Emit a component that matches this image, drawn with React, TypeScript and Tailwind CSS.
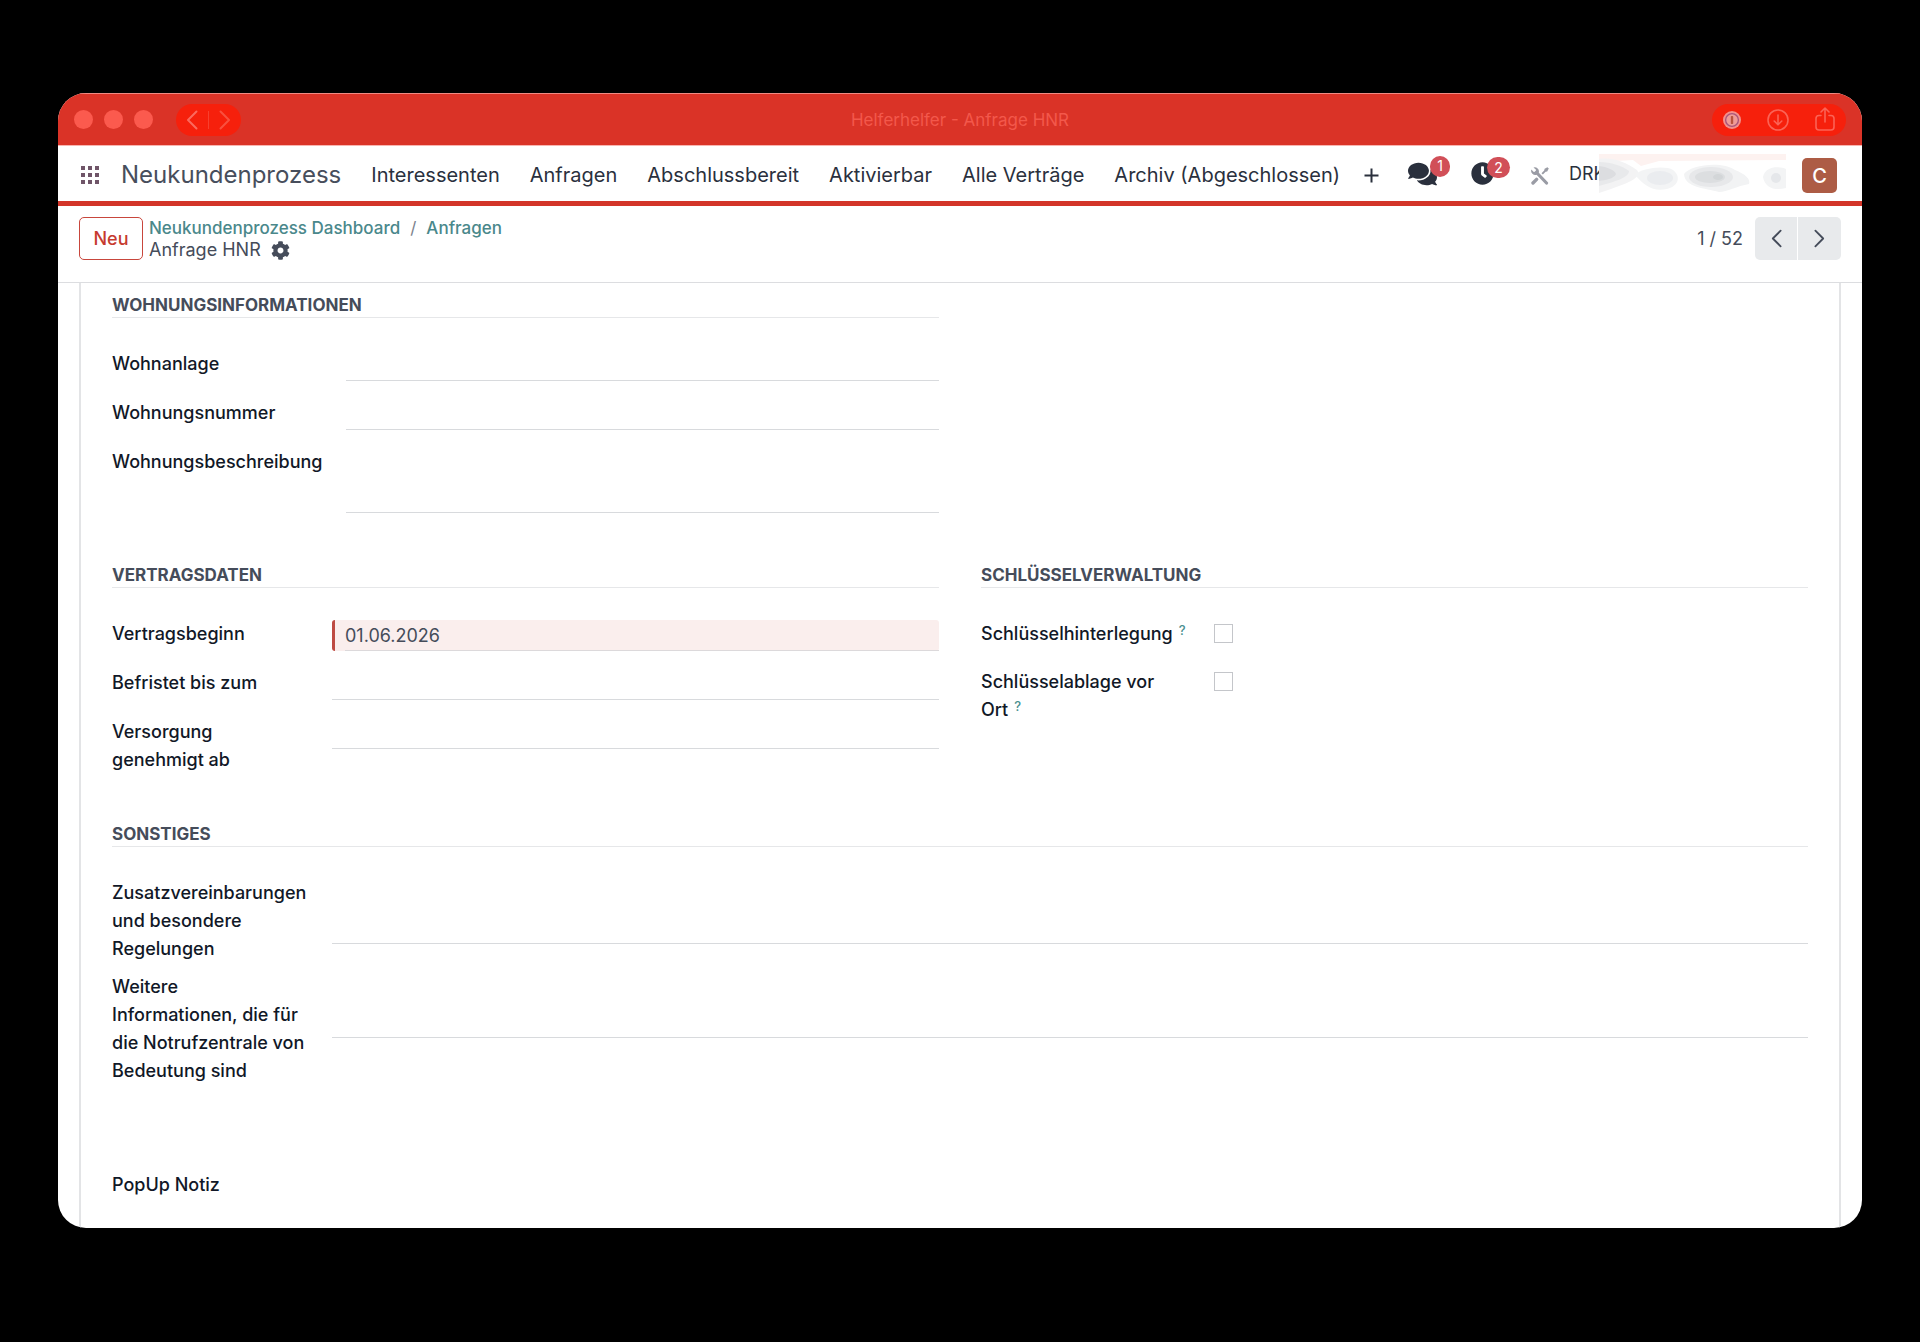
import React from "react";
import { FaClock, FaCog, FaComments } from "react-icons/fa";

const menu = ["Interessenten", "Anfragen", "Abschlussbereit", "Aktivierbar", "Alle Verträge", "Archiv (Abgeschlossen)"];

function Chevron({ dir, className }: { dir: "left" | "right"; className: string }) {
  return (
    <svg viewBox="0 0 12 20" className={className} fill="none" stroke="currentColor" strokeWidth="2" strokeLinecap="round" strokeLinejoin="round" aria-hidden="true">
      <path d={dir === "left" ? "M10.5 1.5 2 10l8.5 8.5" : "M1.5 1.5 10 10l-8.5 8.5"} />
    </svg>
  );
}

function TitleBar() {
  return (
    <div className="grid h-[53px] grid-cols-[1fr_auto_1fr] items-center border-t border-b border-t-[#f08a82] border-b-[#f9b5b0] bg-[#da3327] px-4">
      <div className="flex items-center">
        <div className="flex gap-[11px]">
          <span className="size-[19px] rounded-full bg-[#fb5a4e]" />
          <span className="size-[19px] rounded-full bg-[#fb5a4e]" />
          <span className="size-[19px] rounded-full bg-[#fb5a4e]" />
        </div>
        <div className="ml-[23px] flex h-8 items-center rounded-full bg-[#f6200c] px-2">
          <button type="button" aria-label="Zurück" className="px-[2px] text-[#fb6a5e]">
            <Chevron dir="left" className="h-5 w-3" />
          </button>
          <span className="mx-2 h-[18px] w-px bg-[#f8402f]" />
          <button type="button" aria-label="Vorwärts" className="px-[2px] text-[#f9503f]">
            <Chevron dir="right" className="h-5 w-3" />
          </button>
        </div>
      </div>
      <p className="text-[17px] leading-6 text-[#f3584b]">Helferhelfer - Anfrage HNR</p>
      <div className="flex h-8 w-[134px] items-center justify-between justify-self-end rounded-full bg-[#f6200c] px-[11px] text-[#fb6356]">
        <button type="button" aria-label="Passwortmanager">
          <svg viewBox="0 0 18 18" className="size-[18px]" aria-hidden="true">
            <circle cx="9" cy="9" r="9" fill="#f3918b" />
            <circle cx="9" cy="9" r="6.4" fill="#ef9c97" stroke="#a8557b" strokeWidth="1.4" />
            <rect x="7.8" y="5" width="2.4" height="8" rx="0.8" fill="#b8543f" />
          </svg>
        </button>
        <button type="button" aria-label="Downloads">
          <svg viewBox="0 0 22 22" className="size-[22px]" fill="none" stroke="currentColor" strokeWidth="1.6" strokeLinecap="round" strokeLinejoin="round" aria-hidden="true">
            <circle cx="11" cy="11" r="10" />
            <path d="M11 6v9.5M7.2 12l3.8 3.8 3.8-3.8" />
          </svg>
        </button>
        <button type="button" aria-label="Teilen" className="pb-[2px]">
          <svg viewBox="0 0 20 24" className="h-6 w-5" fill="none" stroke="currentColor" strokeWidth="1.6" strokeLinecap="round" strokeLinejoin="round" aria-hidden="true">
            <path d="M6 8.5H4A3 3 0 0 0 1 11.500V20a3 3 0 0 0 3 3h12a3 3 0 0 0 3-3v-8.500a3 3 0 0 0-3-3h-2M10 15V1.500M6 5l4-4 4 4" />
          </svg>
        </button>
      </div>
    </div>
  );
}

function ToolsIcon() {
  return (
    <svg viewBox="0 0 18 18" className="size-[18px]" aria-hidden="true">
      <path d="M5.500 5.500 15.500 16" stroke="#9a9ca5" strokeWidth="3.200" strokeLinecap="round" />
      <path d="M2.500 0.500 5 2.800 4.600 4.600 2.800 5 0.300 2.600A4.200 4.200 0 0 0 5.600 7.800L7.800 5.600A4.200 4.200 0 0 0 2.500 0.500Z" fill="#9a9ca5" />
      <path d="M10.500 6.200 13.200 3.400 13.600 1.800 16.400 0.200 17.800 1.600 16.200 4.400 14.600 4.800 11.900 7.600Z" fill="#9a9ca5" />
      <path d="M5.600 12.400 2 16" stroke="#9a9ca5" strokeWidth="3.400" strokeLinecap="round" />
    </svg>
  );
}

function Smudge() {
  return (
    <svg viewBox="0 0 187 39" preserveAspectRatio="none" className="absolute inset-y-0 right-0 h-[39px] w-[187px]" aria-hidden="true">
      <rect width="187" height="39" fill="#fff" />
      <path d="M0 0h187v6L60 7 42 12 34 6 0 8Z" fill="#fdf2f0" />
      <path d="M0 5C14 3 26 8 38 16 44 24 26 30 12 35L0 39Z" fill="#f3f3f4" />
      <path d="M0 8C12 8 24 12 30 17 30 24 14 28 0 32Z" fill="#e8e9eb" />
      <path d="M0 12C8 13 16 16 17 20 15 25 6 26 0 27Z" fill="#dcdde0" />
      <path d="M36 21C42 14 66 11 74 16 82 22 80 32 68 35 54 38 46 32 36 21Z" fill="#f3f4f5" />
      <ellipse cx="61" cy="24" rx="13" ry="7" fill="#eaecef" />
      <path d="M85 20C92 10 124 7 136 16 146 20 152 25 150 30 138 32 128 38 120 38 106 34 86 34 85 20Z" fill="#f2f3f4" />
      <ellipse cx="112" cy="23" rx="22" ry="10" fill="#e7e8ea" />
      <ellipse cx="111" cy="23" rx="15" ry="6" fill="#dcdee0" />
      <ellipse cx="119" cy="23" rx="5" ry="3" fill="#d3d6d8" />
      <path d="M164 23C166 12 180 12 187 15V34C176 37 166 34 164 23Z" fill="#f3f4f5" />
      <circle cx="177" cy="24" r="5" fill="#e5e7ea" />
    </svg>
  );
}

function NavBar() {
  return (
    <header className="flex h-[60px] items-center justify-between border-b-[5px] border-[#d33529] pr-[25px] pl-[23px] text-[#2a303d]">
      <nav className="flex items-center gap-6 pt-[2px] text-xl whitespace-nowrap" aria-label="Hauptmenü">
        <div className="flex items-center gap-[30px]">
          <div className="flex items-center gap-[22px]">
            <button type="button" aria-label="Apps" className="grid grid-cols-3 gap-[3px]">
              {Array.from({ length: 9 }, (_, i) => (
                <span key={i} className="size-1 bg-[#6f5568]" />
              ))}
            </button>
            <a href="#start" className="text-2xl text-[#474e5c]">Neukundenprozess</a>
          </div>
          {menu.map((m) => (
            <a key={m} href="#menu">{m}</a>
          ))}
        </div>
        <button type="button" aria-label="Mehr" className="pt-px">
          <svg viewBox="0 0 15 15" className="size-[15px]" aria-hidden="true">
            <path d="M7.500 0.500v14M0.500 7.500h14" stroke="currentColor" strokeWidth="2" />
          </svg>
        </button>
      </nav>
      <div className="flex items-center">
        <button type="button" aria-label="Nachrichten" className="relative mr-[34px]">
          <FaComments className="h-[26px] w-[29px]" />
          <span className="absolute -top-[5px] left-[22px] flex h-[21px] w-5 items-center justify-center rounded-full bg-[#d14f58] text-sm leading-none text-white">1</span>
        </button>
        <button type="button" aria-label="Aktivitäten" className="relative mr-[37px]">
          <FaClock className="size-[23px]" />
          <span className="absolute -top-[5px] left-4 flex h-[21px] w-[23px] items-center justify-center rounded-full bg-[#d14f58] text-sm leading-none text-white">2</span>
        </button>
        <button type="button" aria-label="Werkzeuge" className="mr-[20px] pt-1">
          <ToolsIcon />
        </button>
        <div className="relative mr-4 flex h-[39px] w-[217px] items-center pt-px text-lg">
          DRK
          <Smudge />
        </div>
        <button type="button" className="mt-1 flex size-[35px] items-center justify-center rounded-[5px] bg-[#ad5c45] text-xl font-medium text-white">C</button>
      </div>
    </header>
  );
}

function ControlPanel() {
  return (
    <div className="flex h-[77px] justify-between border-b border-[#dcdde0] px-[21px] pt-[11px]">
      <div className="flex gap-[6px]">
        <button type="button" className="h-[43px] w-16 rounded-[5px] border border-[#c8463c] text-lg font-medium text-[#c63a2f]">Neu</button>
        <div className="text-[#454c5a]">
          <div className="flex text-[17px] leading-[22px] font-medium text-[#4a888b]">
            <a href="#dashboard">Neukundenprozess Dashboard</a>
            <span className="px-[10px] font-normal text-[#7c828d]">/</span>
            <a href="#anfragen">Anfragen</a>
          </div>
          <div className="flex items-center gap-[10px] text-lg leading-[22px]">
            <span>Anfrage HNR</span>
            <button type="button" aria-label="Aktionen">
              <FaCog className="size-[19px]" />
            </button>
          </div>
        </div>
      </div>
      <div className="flex h-[43px] items-center text-[#454c5a]">
        <span className="mr-3 text-lg">1 / 52</span>
        <div className="flex gap-px">
          <button type="button" aria-label="Vorheriger" className="flex h-[43px] w-[42px] items-center justify-center rounded-l-[5px] bg-[#e8eaec]">
            <Chevron dir="left" className="h-[19px] w-[11px]" />
          </button>
          <button type="button" aria-label="Nächster" className="flex h-[43px] w-[43px] items-center justify-center rounded-r-[5px] bg-[#e8eaec]">
            <Chevron dir="right" className="h-[19px] w-[11px]" />
          </button>
        </div>
      </div>
    </div>
  );
}

function Heading({ children }: { children: React.ReactNode }) {
  return <h2 className="mb-8 border-b border-[#e6e7e9] pt-[2px] text-[17px] leading-6 font-bold text-[#454c5a]">{children}</h2>;
}

const labelClass = "text-lg leading-7 font-medium whitespace-pre-line text-[#111827]";
const inputClass = "mb-2 h-[31px] w-full border-b border-[#d8dadd] text-lg text-[#454c5a] outline-none";
const areaClass = "mb-2 block h-[65px] w-full resize-none border-b border-[#d8dadd] text-lg text-[#454c5a] outline-none";

function Check({ id, lines }: { id: string; lines: string[] }) {
  return (
    <>
      <label htmlFor={id} className={labelClass}>
        {lines.map((line, i) => (
          <span key={line} className="flex gap-[6px]">
            <span>{line}</span>
            {i === lines.length - 1 && <span className="text-[13px] leading-5 text-[#4a9090]">?</span>}
          </span>
        ))}
      </label>
      <input id={id} type="checkbox" className="mt-1 mb-[15px] ml-[13px] size-[19px] appearance-none border border-[#c4c6ca] bg-white" />
    </>
  );
}

export default function App() {
  return (
    <div className="flex min-h-screen bg-black px-[58px] pt-[93px] pb-[114px] font-['Inter',sans-serif]">
      <div className="flex w-full flex-col overflow-hidden rounded-[28px] bg-white">
        <TitleBar />
        <NavBar />
        <ControlPanel />
        <main className="mx-[21px] flex-1 border-x-2 border-[#e3e4e6] px-[31px] pt-2">
          <div className="grid grid-cols-2 gap-x-[42px]">
            <section>
              <Heading>WOHNUNGSINFORMATIONEN</Heading>
              <div className="grid grid-cols-[234px_1fr] items-start gap-y-[10px]">
                <label htmlFor="anlage" className={labelClass}>Wohnanlage</label>
                <input id="anlage" className={inputClass} />
                <label htmlFor="nummer" className={labelClass}>Wohnungsnummer</label>
                <input id="nummer" className={inputClass} />
                <label htmlFor="beschreibung" className={labelClass}>Wohnungsbeschreibung</label>
                <textarea id="beschreibung" className={areaClass} />
              </div>
            </section>
          </div>

          <div className="mt-10 grid grid-cols-2 gap-x-[42px]">
            <section>
              <Heading>VERTRAGSDATEN</Heading>
              <div className="grid grid-cols-[220px_1fr] items-start gap-y-[10px]">
                <label htmlFor="beginn" className={labelClass}>Vertragsbeginn</label>
                <div className="mb-2 h-[31px] rounded-[3px] border-l-[3px] border-[#be4b43] bg-[#faeeed] pl-[10px]">
                  <input id="beginn" defaultValue="01.06.2026" className="block h-[31px] w-full border-b border-[#dcd9db] text-lg text-[#454c5a] outline-none" />
                </div>
                <label htmlFor="befristet" className={labelClass}>Befristet bis zum</label>
                <input id="befristet" className={inputClass} />
                <label htmlFor="versorgung" className={labelClass}>{"Versorgung\ngenehmigt ab"}</label>
                <input id="versorgung" className={inputClass} />
              </div>
            </section>
            <section>
              <Heading>SCHLÜSSELVERWALTUNG</Heading>
              <div className="grid grid-cols-[220px_1fr] items-start gap-y-[10px]">
                <Check id="hinterlegung" lines={["Schlüsselhinterlegung"]} />
                <Check id="ablage" lines={["Schlüsselablage vor", "Ort"]} />
              </div>
            </section>
          </div>

          <section className="mt-[46px]">
            <Heading>SONSTIGES</Heading>
            <div className="grid grid-cols-[220px_1fr] items-start gap-y-[10px]">
              <label htmlFor="zusatz" className={labelClass}>{"Zusatzvereinbarungen\nund besondere\nRegelungen"}</label>
              <textarea id="zusatz" className={areaClass} />
              <label htmlFor="weitere" className={labelClass}>{"Weitere\nInformationen, die für\ndie Notrufzentrale von\nBedeutung sind"}</label>
              <textarea id="weitere" className={areaClass} />
            </div>
            <div className="mt-[86px] grid grid-cols-[220px_1fr] items-start">
              <label htmlFor="popup" className={labelClass}>PopUp Notiz</label>
              <textarea id="popup" rows={1} className="block w-full resize-none text-lg text-[#454c5a] outline-none" />
            </div>
          </section>
        </main>
      </div>
    </div>
  );
}
